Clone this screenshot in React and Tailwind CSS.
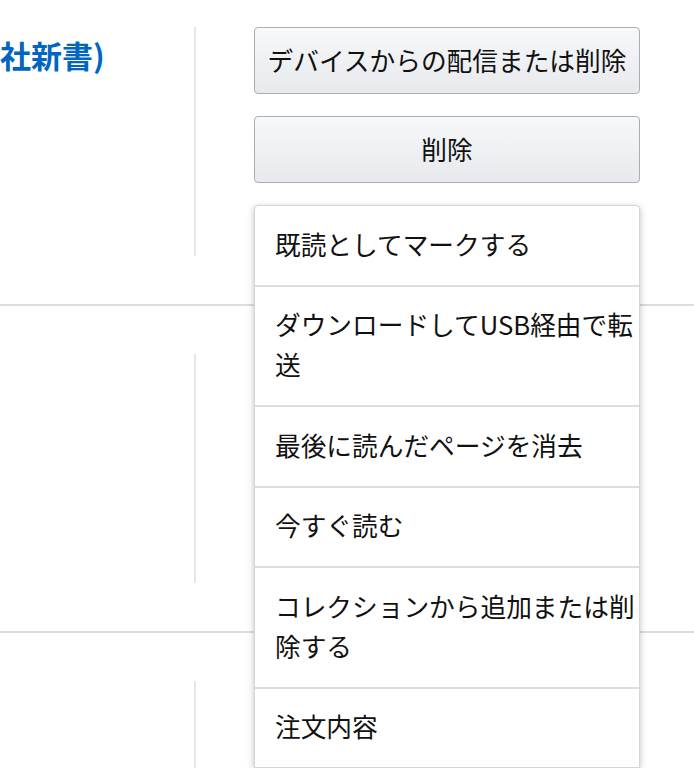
import React from "react";

const menuItems = [
  "既読としてマークする",
  "ダウンロードしてUSB経由で転送",
  "最後に読んだページを消去",
  "今すぐ読む",
  "コレクションから追加または削除する",
  "注文内容",
];

const font = { fontFamily: '"Noto Sans CJK JP", "Noto Sans", sans-serif' };

function Row({ children, left }) {
  return (
    <div className="flex border-b-2 border-[#dddddd] py-[48px]">
      <div className="w-[194px] shrink-0">{left}</div>
      <div className="w-[2px] shrink-0 bg-[#e6e6e6]" />
      <div className="ml-[58px] w-[386px] min-h-[229px]">{children}</div>
    </div>
  );
}

function Button({ label }) {
  return (
    <button className="flex h-[67px] w-full items-center justify-center rounded-[4px] border border-[#a9adb4] bg-gradient-to-b from-[#f7f8fa] to-[#e7e9ec] text-[25.7px] text-[#111111] shadow-[0_1px_0_rgba(255,255,255,0.6)_inset]">
      {label}
    </button>
  );
}

export default function App() {
  return (
    <div className="relative h-[768px] w-[694px] overflow-hidden bg-white" style={font}>
      <div className="-mt-[21px]">
        <Row
          left={
            <div className="pt-[10px] text-[31px] font-bold leading-[36px] text-[#0066c0] whitespace-nowrap">
              社新書)
            </div>
          }
        >
          <div className="flex flex-col gap-[22px]">
            <Button label="デバイスからの配信または削除" />
            <Button label="削除" />
          </div>
        </Row>
        <Row />
        <Row />
      </div>

      {/* ドロップダウン */}
      <div className="absolute left-[254px] top-[205px] w-[386px] rounded-t-[4px] border border-[#d5d5d5] bg-white shadow-[0_2px_7px_rgba(0,0,0,0.25)]">
        {menuItems.map((item, i) => (
          <div
            key={item}
            className={
              "pl-[20px] pr-0 pt-[17.75px] pb-[20.75px] text-[25.7px] leading-[40px] text-[#111111] " +
              (i > 0 ? "border-t-2 border-[#dddddd]" : "")
            }
          >
            {item}
          </div>
        ))}
      </div>
    </div>
  );
}
